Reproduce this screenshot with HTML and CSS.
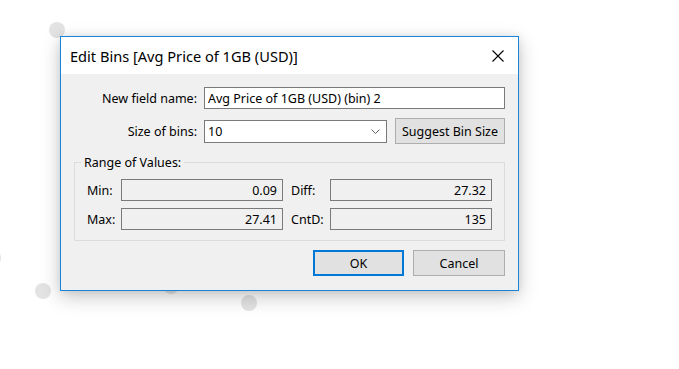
FILE: index.html
```html
<!DOCTYPE html>
<html>
<head>
<meta charset="utf-8">
<link rel="stylesheet" href="styles.css">
</head>
<body>
<div class="desktop">
  <span class="dot dot-a"></span>
  <span class="dot dot-b"></span>
  <span class="dot dot-c"></span>
  <span class="dot dot-d"></span>
  <span class="dot dot-e"></span>

  <div class="dialog">
    <div class="titlebar">
      <span class="title">Edit Bins [Avg Price of 1GB (USD)]</span>
      <svg class="close" width="12" height="12" viewBox="0 0 12 12"><path d="M0.5 0.5 L11.5 11.5 M11.5 0.5 L0.5 11.5" stroke="#000" stroke-width="1.1" fill="none"/></svg>
    </div>
    <div class="content">
      <div class="row row-name">
        <label class="lbl">New field name:</label>
        <div class="input name-input">Avg Price of 1GB (USD) (bin) 2</div>
      </div>
      <div class="row row-size">
        <label class="lbl">Size of bins:</label>
        <div class="input select">
          <span>10</span>
          <svg class="chev" width="9" height="5" viewBox="0 0 9 5"><path d="M0.5 0.5 L4.5 4.5 L8.5 0.5" stroke="#606060" stroke-width="1" fill="none"/></svg>
        </div>
        <button class="btn suggest">Suggest Bin Size</button>
      </div>
      <fieldset class="group">
        <legend>Range of Values:</legend>
        <div class="grid">
          <span class="glbl">Min:</span><div class="val">0.09</div>
          <span class="glbl glbl-r">Diff:</span><div class="val">27.32</div>
          <span class="glbl">Max:</span><div class="val">27.41</div>
          <span class="glbl glbl-r">CntD:</span><div class="val">135</div>
        </div>
      </fieldset>
      <div class="actions">
        <button class="btn ok">OK</button>
        <button class="btn cancel">Cancel</button>
      </div>
    </div>
  </div>
</div>
</body>
</html>
```

FILE: styles.css
```css
* { box-sizing: border-box; }
html, body {
  margin: 0;
  padding: 0;
  background: #fff;
  width: 679px;
  height: 369px;
  overflow: hidden;
  font-family: "Noto Sans", "Open Sans", sans-serif;
  font-size: 12.5px;
  color: #000;
}
.desktop {
  position: relative;
  width: 679px;
  height: 369px;
}
.dot {
  position: absolute;
  width: 16px;
  height: 16px;
  border-radius: 50%;
  background: #e3e3e3;
}
.dot-a { left: 49px; top: 22px; }
.dot-b { left: 35px; top: 283px; }
.dot-c { left: 241px; top: 295px; }
.dot-d { left: 163px; top: 278px; }
.dot-e { left: -15px; top: 250px; }

.dialog {
  position: absolute;
  left: 60px;
  top: 36px;
  width: 459px;
  height: 255px;
  border: 1px solid #1883d7;
  background: #f0f0f0;
  box-shadow: 0 6px 18px rgba(0,0,0,0.22), 0 0 8px rgba(0,0,0,0.08);
  display: flex;
  flex-direction: column;
}
.titlebar {
  height: 37px;
  flex: none;
  background: #fff;
  display: flex;
  align-items: center;
  justify-content: space-between;
  padding: 0 14px 0 9px;
}
.title {
  font-size: 14.6px;
}
.close { display: block; }

.content {
  flex: 1;
  padding: 13px 13px 0 13px;
  display: flex;
  flex-direction: column;
}
.row {
  display: flex;
  align-items: center;
}
.lbl {
  width: 130px;
  text-align: right;
  padding-right: 7px;
  flex: none;
}
.input {
  background: #fff;
  border: 1px solid #7a7a7a;
  height: 22px;
  display: flex;
  align-items: center;
  padding: 0 3px;
  white-space: nowrap;
}
.name-input { width: 302px; }
.row-size { margin-top: 9px; }
.select {
  width: 183px;
  height: 23px;
  justify-content: space-between;
  padding-right: 6px;
}
.btn {
  font: inherit;
  color: #000;
  background: #e1e1e1;
  border: 1px solid #adadad;
  height: 26px;
  padding: 0;
  margin: 0;
}
.suggest {
  width: 110px;
  margin-left: 8px;
}
.group {
  margin: 10px 0 0 0;
  padding: 8px 11px 0 11px;
  border: 1px solid #dcdcdc;
  height: 87px;
  min-width: 0;
}
.group legend {
  padding: 0 3px;
  margin-left: -5px;
}
.grid {
  display: grid;
  grid-template-columns: 35px 162px 47px 162px;
  grid-auto-rows: 22px;
  row-gap: 7px;
  align-items: center;
}
.glbl { padding-left: 1px; }
.glbl-r { padding-left: 8px; }
.val {
  height: 22px;
  border: 1px solid #7a7a7a;
  background: #f0f0f0;
  display: flex;
  align-items: center;
  justify-content: flex-end;
  padding-right: 5px;
}
.actions {
  display: flex;
  justify-content: flex-end;
  gap: 9px;
  margin-top: 9px;
}
.actions .btn { width: 91px; }
.actions .cancel { width: 92px; }
.ok { border: 2px solid #0078d7; }
```
